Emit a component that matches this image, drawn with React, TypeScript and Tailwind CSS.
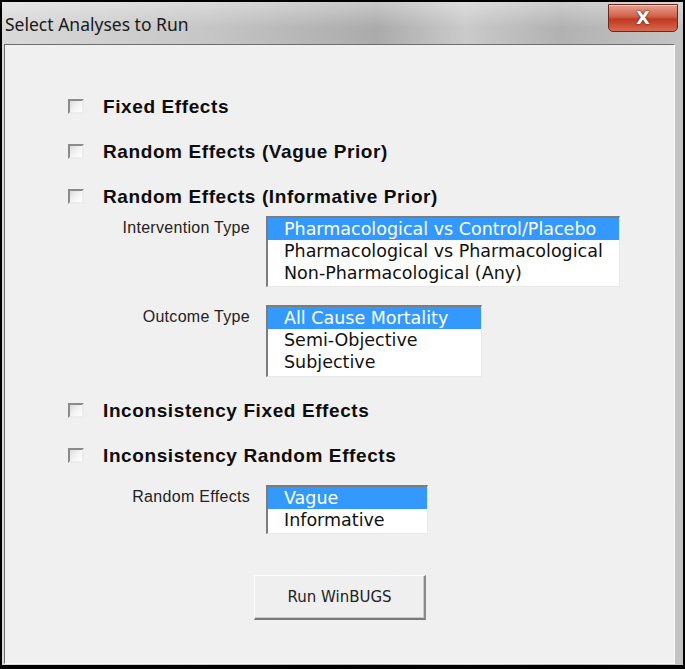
import React from "react";

function Checkbox() {
  return (
    <div className="w-[16px] h-[15px] shrink-0 border-2 border-t-[#8a8a8a] border-l-[#8a8a8a] border-r-[#ececec] border-b-[#ececec] bg-[linear-gradient(135deg,#dcdcdc,#f4f4f4_55%,#ffffff)]" />
  );
}

function CheckRow({ label }: { label: string }) {
  return (
    <div className="flex items-center h-[24px]">
      <div className="w-[35px] flex items-center">
        <Checkbox />
      </div>
      <span className="text-[19px] font-bold tracking-[0.6px] text-[#0d0d0d] leading-none [font-family:'Liberation_Sans',Arial,sans-serif]">
        {label}
      </span>
    </div>
  );
}

function ListBox({
  items,
  width,
  pad,
}: {
  items: string[];
  width: string;
  pad: string;
}) {
  return (
    <div
      className={`${width} ${pad} bg-white border-t-2 border-l-2 border-r border-b border-t-[#7c7c7c] border-l-[#7c7c7c] border-r-[#e8e8e8] border-b-[#e8e8e8] flex flex-col`}
    >
      {items.map((it, i) => (
        <div
          key={it}
          className={`h-[22px] flex items-center pl-[16px] pt-[1px] text-[17.5px] leading-none whitespace-nowrap [font-family:'DejaVu_Sans',sans-serif] ${
            i === 0 ? "bg-[#3399ff] text-white" : "text-[#111]"
          }`}
        >
          {it}
        </div>
      ))}
    </div>
  );
}

function LabeledList({
  label,
  items,
  width,
  pad,
}: {
  label: string;
  items: string[];
  width: string;
  pad: string;
}) {
  return (
    <div className="flex items-start">
      <div className="w-[198px] text-right pr-[16px] pt-[2px] text-[16px] tracking-[0.3px] leading-[20px] text-[#222] [font-family:'Liberation_Sans',Arial,sans-serif]">
        {label}
      </div>
      <ListBox items={items} width={width} pad={pad} />
    </div>
  );
}

export default function App() {
  return (
    <div className="w-[685px] h-[669px] bg-black pt-[2px] pl-[2px] pr-[2px] pb-[4px]">
      <div className="w-full h-full flex flex-col bg-[linear-gradient(to_right,#d9d9d9,#c6c6c6_30%,#ababab_55%,#cacaca_68%,#b2b2b2_82%,#c4c4c4)]">
        {/* Title bar */}
        <div className="h-[42px] shrink-0 flex items-start justify-between bg-[linear-gradient(to_bottom,rgba(255,255,255,0.35),rgba(255,255,255,0)_60%)]">
          <div className="pl-[3px] pt-[14px] text-[17.5px] leading-none text-[#1a1a1a] [font-family:'Noto_Sans',sans-serif]">
            Select Analyses to Run
          </div>
          <div className="mr-[5px] mt-[2px] w-[70px] h-[28px] rounded-b-[5px] border border-[#6a2a20] bg-[linear-gradient(to_bottom,#e8a090,#d06048_45%,#c03820_55%,#d86a50)] flex items-center justify-center shadow-[inset_0_1px_0_rgba(255,255,255,0.5)]">
            <span className="text-white font-bold text-[18px] leading-none [font-family:'DejaVu_Sans',sans-serif] [text-shadow:0_0_2px_#502018,0_0_1px_#502018]">
              X
            </span>
          </div>
        </div>
        {/* Content */}
        <div className="flex-1 ml-[2px] mr-[8px] mb-[1px] bg-[#f0f0f0] border-t border-l border-t-[#6e6e6e] border-l-[#6e6e6e] border-r border-b border-r-[#fafafa] border-b-[#fafafa] flex flex-col pl-[63px] pt-[49px]">
          <div className="flex flex-col gap-[21px]">
            <CheckRow label="Fixed Effects" />
            <CheckRow label="Random Effects (Vague Prior)" />
            <CheckRow label="Random Effects (Informative Prior)" />
          </div>
          <div className="mt-[8px]">
            <LabeledList
              label="Intervention Type"
              width="w-[354px]"
              pad="pb-[2px]"
              items={[
                "Pharmacological vs Control/Placebo",
                "Pharmacological vs Pharmacological",
                "Non-Pharmacological (Any)",
              ]}
            />
          </div>
          <div className="mt-[18px]">
            <LabeledList
              label="Outcome Type"
              width="w-[216px]"
              pad="pb-[3px]"
              items={["All Cause Mortality", "Semi-Objective", "Subjective"]}
            />
          </div>
          <div className="flex flex-col gap-[21px] mt-[21px]">
            <CheckRow label="Inconsistency Fixed Effects" />
            <CheckRow label="Inconsistency Random Effects" />
          </div>
          <div className="mt-[18px]">
            <LabeledList
              label="Random Effects"
              width="w-[162px]"
              pad="pb-[2px]"
              items={["Vague", "Informative"]}
            />
          </div>
          <div className="mt-[41px] pl-[186px]">
            <button className="w-[172px] h-[45px] bg-[#efefef] border-t border-l border-t-[#ffffff] border-l-[#ffffff] border-r-2 border-b-2 border-r-[#8a8a8a] border-b-[#7a7a7a] text-[15px] text-[#222] [font-family:'DejaVu_Sans',sans-serif] shadow-[inset_-1px_-1px_0_#c8c8c8]">
              Run WinBUGS
            </button>
          </div>
        </div>
      </div>
    </div>
  );
}
